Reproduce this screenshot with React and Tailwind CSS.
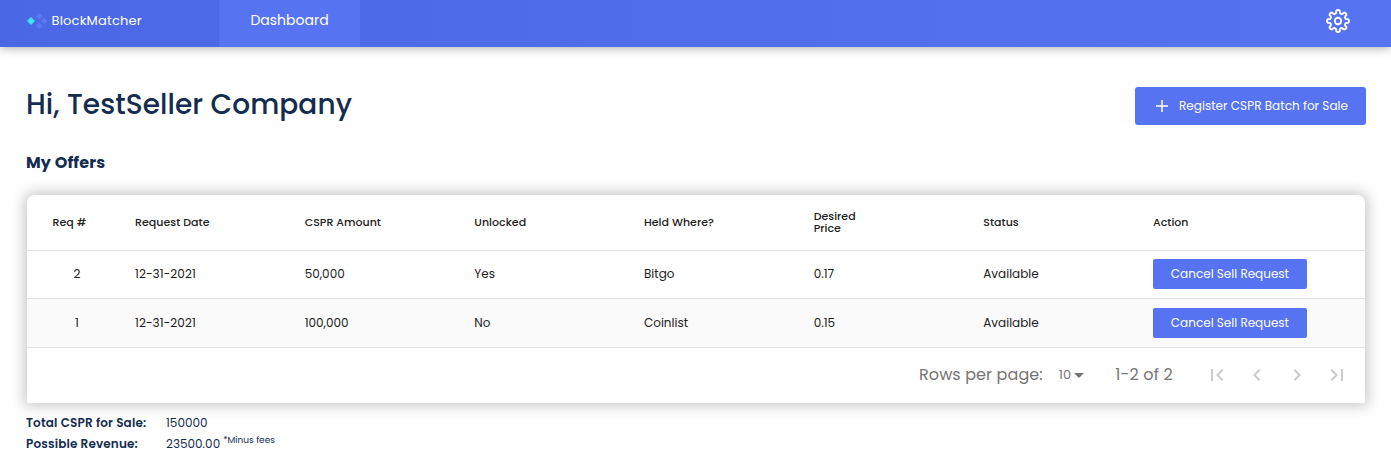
const columns = ["Request Date", "CSPR Amount", "Unlocked", "Held Where?", "Desired Price", "Status", "Action"];

const offers = [
  { id: "2", date: "12-31-2021", amount: "50,000", unlocked: "Yes", held: "Bitgo", price: "0.17", status: "Available" },
  { id: "1", date: "12-31-2021", amount: "100,000", unlocked: "No", held: "Coinlist", price: "0.15", status: "Available" },
];

const grid = "grid grid-cols-[92px_repeat(6,169.67px)_1fr] items-center";

// Eight-lobed outline of the settings gear
const gearPath =
  Array.from({ length: 128 }, (_, i) => {
    const a = (i / 128) * Math.PI * 2;
    const r = 9.4 + 1.6 * Math.cos(8 * a);
    const w = a + 0.05 * Math.sin(16 * a);
    return `${i ? "L" : "M"}${(12 + r * Math.sin(w)).toFixed(2)} ${(12 - r * Math.cos(w)).toFixed(2)}`;
  }).join("") + "Z";

function Logo() {
  return (
    <svg className="h-[18px] w-[21px] shrink-0" viewBox="0 0 21 18">
      <path d="M4 5.200 7.800 9 4 12.800 .2 9Z" fill="#3fe3f3" stroke="#3fe3f3" strokeWidth=".4" strokeLinejoin="round" />
      <g fill="#5b78f6" stroke="#4562d8" strokeWidth=".4">
        <path d="M12.300 .4 16.100 4.200 12.300 8 8.500 4.200Z" />
        <path d="M17.100 5.200 20.900 9 17.100 12.800 13.300 9Z" />
        <path d="M12.300 10 16.100 13.800 12.300 17.600 8.500 13.800Z" />
      </g>
    </svg>
  );
}

function Gear() {
  return (
    <svg className="size-6" viewBox="0 0 24 24" fill="none" stroke="currentColor" strokeWidth="1.9" strokeLinejoin="round">
      <path d={gearPath} />
      <circle cx="12" cy="12" r="3.200" />
    </svg>
  );
}

function PageButton({ d }) {
  return (
    <button className="flex size-10 items-center justify-center">
      <svg className="size-6" viewBox="0 0 24 24" fill="#cbcbcb">
        <path d={d} />
      </svg>
    </button>
  );
}

export default function App() {
  return (
    <div className="h-[467px] overflow-hidden bg-white font-['Poppins','Inter',sans-serif] text-[12px] text-[#132c50]">
      <header className="flex h-[47px] items-stretch bg-gradient-to-r from-[#4a68e4] to-[#5673f2] text-white shadow-[0_0_10px_rgba(0,0,0,0.4)]">
        <div className="flex w-[219px] items-center pb-[6px] pl-[27px]">
          <Logo />
          <span className="ml-[3.5px] text-[13px] tracking-[0.21px]">BlockMatcher</span>
        </div>
        <a className="flex w-[141px] items-center justify-center bg-[#5673f2] pb-[6px] text-[14px]">Dashboard</a>
        <div className="ml-auto flex items-start pt-[9px] pr-[41px]">
          <Gear />
        </div>
      </header>

      <main className="pl-[26px]">
        <div className="mt-10 flex h-[38px] items-center justify-between pr-[25px]">
          <h1 className="pb-0.5 text-[28px] leading-[38px] font-medium tracking-[0.07px] whitespace-nowrap">Hi, TestSeller Company</h1>
          <button className="flex h-[38px] w-[231px] items-center rounded-[3px] bg-[#5673f2] pl-[21px] whitespace-nowrap text-white">
            <svg className="mr-[11px] size-3 shrink-0" viewBox="0 0 12 12" stroke="currentColor" strokeWidth="1.5"><path d="M6 0v12M0 6h12" /></svg>
            <span className="tracking-[0.03px]">Register CSPR Batch for Sale</span>
          </button>
        </div>
        <h2 className="mt-[26px] text-[16px] leading-6 font-bold tracking-[0.16px]">My Offers</h2>

        <section className="mt-5 ml-px w-[1338px] rounded-t-[8px] bg-white text-[#212121] shadow-[0_0_14px_3px_rgba(0,0,0,0.22)]">
          <div className={grid + " h-14 border-b border-[#e0e0e0] pb-0.5 text-[11px] leading-3 font-medium tracking-[0.03px]"}>
            <div className="pl-[25.5px]">Req #</div>
            {columns.map((name) => (
              <div key={name} className="pl-4">
                <span className={name === "Desired Price" ? "block w-12" : ""}>{name}</span>
              </div>
            ))}
          </div>
          {offers.map((o, i) => (
            <div key={o.id} className={grid + (i ? " h-[49px] bg-[#fafafa]" : " h-12 pb-0.5") + " border-b border-[#e0e0e0]"}>
              <div className="pl-2 text-center">{o.id}</div>
              <div className="pl-4 tracking-[0.08px]">{o.date}</div>
              <div className="pl-4">{o.amount}</div>
              <div className="pl-4">{o.unlocked}</div>
              <div className="pl-4">{o.held}</div>
              <div className="pl-4">{o.price}</div>
              <div className="pl-4">{o.status}</div>
              <div className="pl-4">
                <button className="flex h-[30px] w-[154px] items-center justify-center rounded-[2px] bg-[#5673f2] text-white">Cancel Sell Request</button>
              </div>
            </div>
          ))}
          <div className="flex h-[55px] items-center justify-end pr-2 pb-px text-[16px] text-[#757575]">
            <span className="tracking-[0.1px]">Rows per page:</span>
            <span className="ml-4 text-[13px]">10</span>
            <svg className="ml-[3px] h-[5px] w-[10px]" viewBox="0 0 10 5" fill="currentColor"><path d="M0 0h10L5 5z" /></svg>
            <span className="mr-6 ml-[31px] tracking-[0.18px]">1-2 of 2</span>
            <PageButton d="M18.410 16.590L13.820 12l4.590-4.590L17 6l-6 6 6 6zM6 6h2v12H6z" />
            <PageButton d="M15.410 7.410L14 6l-6 6 6 6 1.410-1.410L10.830 12z" />
            <PageButton d="M10 6L8.590 7.410 13.170 12l-4.580 4.590L10 18l6-6z" />
            <PageButton d="M5.590 7.410L10.180 12l-4.590 4.590L7 18l6-6-6-6zM16 6h2v12h-2z" />
          </div>
        </section>

        <dl className="mt-[9px] grid grid-cols-[140px_1fr] leading-[21px]">
          <dt className="font-semibold tracking-[0.18px]">Total CSPR for Sale:</dt>
          <dd>150000</dd>
          <dt className="font-semibold tracking-[0.16px]">Possible Revenue:</dt>
          <dd className="flex">
            <span>23500.00</span>
            <span className="-mt-[3px] ml-[3px] text-[9px]">*Minus fees</span>
          </dd>
        </dl>
      </main>
    </div>
  );
}
